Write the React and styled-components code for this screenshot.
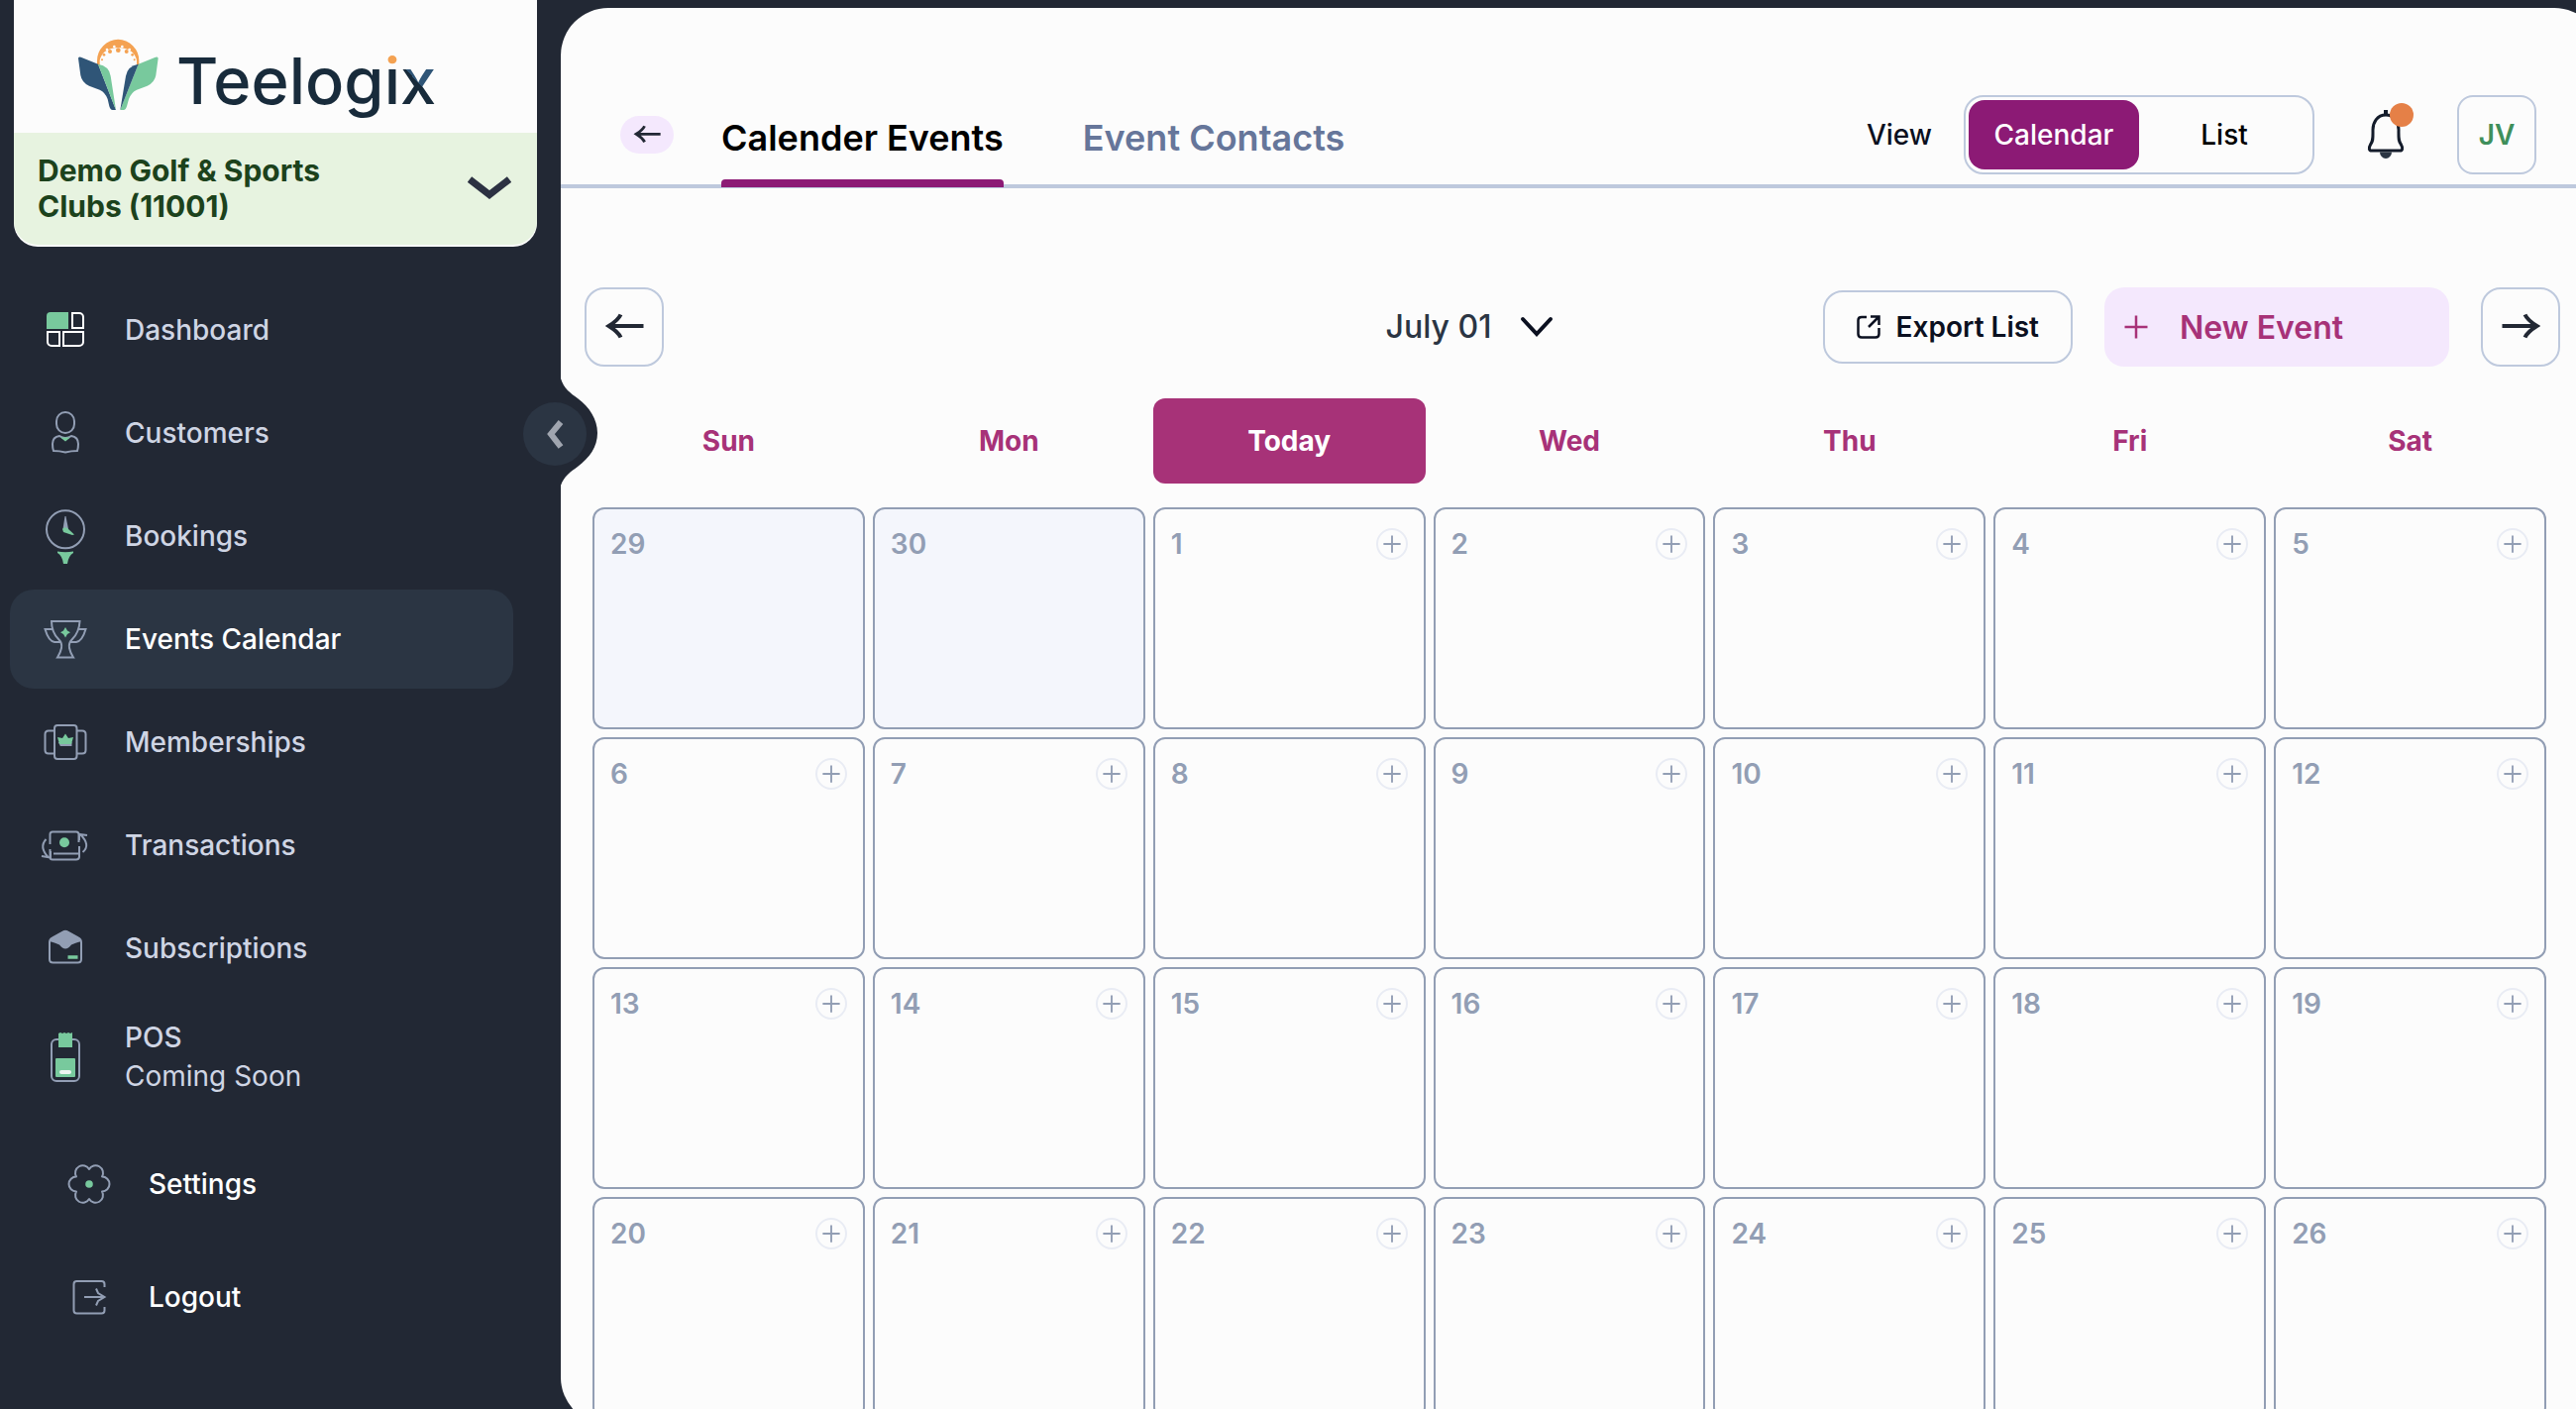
import React from "react";
import styled, { createGlobalStyle } from "styled-components";

const color = {
  ink: "#222834",
  inkSoft: "#2b3543",
  paper: "#fcfcfc",
  line: "#bec9dd",
  slate: "#929eb4",
  navText: "#cfd5e4",
  green: "#78c99d",
  plum: "#8c1a75",
  magenta: "#a73278",
  lavender: "#f4e8fd",
};

const GlobalStyle = createGlobalStyle`
  *, *::before, *::after { box-sizing: border-box; }
  body {
    margin: 0;
    background: ${color.ink};
    font-family: Inter, "Liberation Sans", sans-serif;
  }
  button, select { font-family: inherit; }
  svg { display: block; flex: none; }
`;

const Shell = styled.div`
  display: grid;
  grid-template-columns: 566px minmax(0, 1fr);
  height: 100vh;
  overflow: hidden;
  background: ${color.ink};
`;

/* ---------- Sidebar ---------- */

const Sidebar = styled.aside`
  position: relative;
  z-index: 1;
`;

const BrandCard = styled.div`
  margin: 0 24px 0 14px;
  padding-bottom: 2px;
  background: ${color.paper};
  border-radius: 0 0 24px 24px;
`;

const LogoLink = styled.a`
  display: block;
  padding: 30px 0 4px 56px;
`;

const ClubButton = styled.button`
  display: flex;
  align-items: center;
  justify-content: space-between;
  width: 100%;
  height: 113px;
  padding: 0 26px 2px 24px;
  border: 0;
  border-radius: 0 0 24px 24px;
  background: #e7f3e0;
  color: #1c421c;
  font-size: 30px;
  font-weight: 700;
  line-height: 36px;
  text-align: left;
`;

const ClubName = styled.span`
  max-width: 320px;
`;

const NavList = styled.ul`
  display: flex;
  flex-direction: column;
  gap: ${(p) => (p.$secondary ? 14 : 4)}px;
  margin: ${(p) => (p.$secondary ? 22 : 34)}px 48px 0 10px;
  padding: 0;
  list-style: none;
`;

const NavLink = styled.a`
  display: flex;
  align-items: center;
  gap: 30px;
  min-height: 100px;
  padding: 17px 26px 17px ${(p) => (p.$secondary ? 50 : 26)}px;
  border-radius: 24px;
  background: ${(p) => (p.$active ? color.inkSoft : "transparent")};
  color: ${(p) => (p.$active || p.$secondary ? "#ffffff" : color.navText)};
  font-size: 28px;
  font-weight: 500;
  line-height: 39px;
  text-decoration: none;
`;

const NavNote = styled.span`
  display: block;
  font-weight: 400;
`;

const CollapseButton = styled.button`
  position: absolute;
  top: 382px;
  right: -40px;
  width: 80px;
  height: 110px;
  padding: 0;
  border: 0;
  background: none;
`;

/* ---------- Main panel ---------- */

const Panel = styled.main`
  margin: 8px -26px -16px 0;
  overflow: hidden;
  background: ${color.paper};
  border-radius: 48px;
`;

const Header = styled.header`
  display: flex;
  align-items: flex-start;
  padding: 88px 66px 0 60px;
  border-bottom: 4px solid ${color.line};
`;

const BackButton = styled.button`
  display: grid;
  place-items: center;
  width: 54px;
  height: 38px;
  margin: 21px 48px 0 0;
  padding: 0;
  border: 0;
  border-radius: 19px;
  background: ${color.lavender};
`;

const Tabs = styled.nav`
  display: flex;
  gap: 80px;
  margin: 21px auto -3px 0;
`;

const Tab = styled.a`
  display: flex;
  flex-direction: column;
  color: ${(p) => (p.$active ? "#000000" : "#66769a")};
  font-size: 36px;
  font-weight: 600;
  line-height: 44px;
  text-decoration: none;

  &::after {
    content: "";
    height: 8px;
    margin-top: 20px;
    border-radius: 4px 4px 0 0;
    background: ${(p) => (p.$active ? color.plum : "transparent")};
  }
`;

const HeaderActions = styled.div`
  display: flex;
  align-items: center;
  gap: 44px;
`;

const ViewField = styled.div`
  display: flex;
  align-items: center;
  gap: 32px;
  color: #0b1020;
  font-size: 28px;
  font-weight: 500;
`;

const Toggle = styled.div`
  display: flex;
  width: 354px;
  height: 80px;
  padding: 3px;
  border: 2px solid ${color.line};
  border-radius: 20px;
`;

const ToggleOption = styled.button`
  flex: 1;
  padding: 0;
  border: 0;
  border-radius: 16px;
  background: ${(p) => (p.$active ? color.plum : "transparent")};
  color: ${(p) => (p.$active ? "#ffffff" : "#000000")};
  font-size: 28px;
  font-weight: 500;
`;

const BellButton = styled.button`
  position: relative;
  width: 56px;
  height: 80px;
  padding: 0;
  border: 0;
  background: none;
`;

const BellDot = styled.span`
  position: absolute;
  top: 8px;
  right: 0;
  width: 24px;
  height: 24px;
  border-radius: 50%;
  background: #e58047;
`;

const SquareButton = styled.button`
  display: grid;
  place-items: center;
  width: 80px;
  height: 80px;
  padding: 0;
  border: 2px solid ${color.line};
  border-radius: ${(p) => (p.$avatar ? 16 : 20)}px;
  background: ${color.paper};
  color: #3f8f5b;
  font-size: 28px;
  font-weight: 600;
`;

/* ---------- Toolbar ---------- */

const Toolbar = styled.div`
  display: flex;
  align-items: center;
  gap: 32px;
  padding: 100px 42px 0 24px;
`;

const MonthArea = styled.div`
  display: flex;
  flex: 1;
  justify-content: flex-end;
  padding-right: 240px;
`;

const MonthPicker = styled.label`
  position: relative;
  display: flex;
  align-items: center;
`;

const MonthSelect = styled.select`
  appearance: none;
  padding: 0 62px 0 0;
  border: 0;
  background: none;
  color: #2b3543;
  font-size: 32px;
  font-weight: 500;
  line-height: 40px;
`;

const MonthChevron = styled.svg`
  position: absolute;
  right: 0;
  pointer-events: none;
`;

const ExportButton = styled.button`
  display: flex;
  align-items: center;
  gap: 16px;
  height: 74px;
  padding: 0 32px;
  border: 2px solid ${color.line};
  border-radius: 20px;
  background: ${color.paper};
  color: #0b1020;
  font-size: 28px;
  font-weight: 600;
`;

const NewEventButton = styled.button`
  display: flex;
  align-items: center;
  gap: 32px;
  min-width: 348px;
  height: 80px;
  padding: 0 20px;
  border: 0;
  border-radius: 20px;
  background: ${color.lavender};
  color: ${color.magenta};
  font-size: 32px;
  font-weight: 600;
`;

/* ---------- Calendar ---------- */

const Calendar = styled.table`
  display: grid;
  grid-template-columns: repeat(7, minmax(0, 1fr));
  gap: 8px;
  margin: 32px 56px 6px 32px;

  thead, tbody, tr { display: contents; }
`;

const Weekday = styled.th`
  height: 86px;
  margin-bottom: 16px;
  padding: 0;
  border-radius: 12px;
  background: ${(p) => (p.$today ? color.magenta : "transparent")};
  color: ${(p) => (p.$today ? "#ffffff" : color.magenta)};
  font-size: 28px;
  font-weight: 700;
  line-height: 86px;
  text-align: center;
`;

const Day = styled.td`
  display: flex;
  align-items: flex-start;
  justify-content: space-between;
  height: 224px;
  padding: 19px 16px;
  border: 2px solid ${color.slate};
  border-radius: 12px;
  background: ${(p) => (p.$outside ? "#f4f6fc" : color.paper)};
  color: ${color.slate};
  font-size: 28px;
  font-weight: 600;
  line-height: 32px;
`;

const AddButton = styled.button`
  display: grid;
  place-items: center;
  width: 32px;
  height: 32px;
  padding: 0;
  border: 2px solid #e9ecf4;
  border-radius: 50%;
  background: ${color.paper};
`;

/* ---------- Drawings ---------- */

const Logo = () => (
  <svg width="390" height="100" viewBox="0 0 390 100" role="img" aria-label="Teelogix">
    <defs>
      <linearGradient id="logoI" gradientUnits="userSpaceOnUse" x1="0" y1="0" x2="0" y2="100">
        <stop offset="0.37" stopColor="#f4a252" />
        <stop offset="0.37" stopColor="#182b3b" />
      </linearGradient>
      <linearGradient id="logoX" gradientUnits="userSpaceOnUse" x1="349" y1="57" x2="366" y2="41">
        <stop offset="0.2" stopColor="#182b3b" />
        <stop offset="0.2" stopColor="#2f5577" />
      </linearGradient>
    </defs>
    <g transform="scale(0.3333)">
      <path
        d="M84 108V94A63 64 0 0 1 211 94V108H204V94Q202 78 188 66Q170 54 148 54Q126 54 108 66Q94 78 92 94V108Z"
        fill="#f4a252"
      />
      <g fill="#fcfcfc">
        <circle cx="136" cy="51" r="4" />
        <circle cx="160" cy="51" r="4" />
        <circle cx="114" cy="60" r="4" />
        <circle cx="182" cy="60" r="4" />
      </g>
      <g fill="#f4a252">
        <circle cx="148" cy="62" r="7" />
        <circle cx="123" cy="66" r="6" />
        <circle cx="173" cy="66" r="6" />
        <circle cx="105" cy="76" r="4" />
        <circle cx="191" cy="76" r="4" />
        <circle cx="99" cy="91" r="3" />
        <circle cx="197" cy="91" r="3" />
      </g>
      <path
        d="M27 86Q29 81 37 84L87 104L141 243H131Q124 243 121 232L116 210Q109 190 92 182L60 170Q38 160 34 138Z"
        fill="#2f5577"
      />
      <path d="M87 104Q121 110 125 140L141 243Z" fill={color.green} />
      <path
        d="M269 86Q267 81 259 84L209 104L154 243H164Q171 243 174 232L180 210Q187 190 204 182L236 170Q258 160 262 138Z"
        fill={color.green}
      />
      <path d="M209 104Q176 110 171 140L154 243Z" fill="#2f5577" />
    </g>
    <text x="108" y="75" fill="#182b3b" fontFamily="Inter, sans-serif" fontSize="65" fontWeight="500">
      Teelog<tspan fill="url(#logoI)">i</tspan>
      <tspan fill="url(#logoX)">x</tspan>
    </text>
  </svg>
);

const NavIcon = ({ children }) => (
  <svg
    width="60"
    height="60"
    viewBox="0 0 60 60"
    fill="none"
    stroke={color.slate}
    strokeWidth="2"
    aria-hidden="true"
  >
    {children}
  </svg>
);

const DashboardIcon = () => (
  <NavIcon>
    <path d="M15 12H33V29H11V16A4 4 0 0 1 15 12Z" fill={color.green} stroke="none" />
    <g stroke="#ffffff">
      <path d="M37 13H44A4 4 0 0 1 48 17V28H37Z" />
      <path d="M12 32H24V46H16A4 4 0 0 1 12 42Z" />
      <path d="M28 32H48V42A4 4 0 0 1 44 46H28Z" />
    </g>
  </NavIcon>
);

const CustomersIcon = () => (
  <NavIcon>
    <rect x="21" y="9" width="18" height="21" rx="9" />
    <path d="M24 33Q17 34 17 41Q17 45 18 48Q24 48 30 49.500Q36 48 42 48Q43 45 43 41Q43 34 36 33Q30 37 24 33Z" />
    <path d="M25 34.500H35L30 38.500Z" fill={color.green} stroke="none" />
  </NavIcon>
);

const BookingsIcon = () => (
  <NavIcon>
    <circle cx="30" cy="23.300" r="19" />
    <path d="M29.500 10H30.500L33 23H27.500Z" fill={color.slate} stroke="none" />
    <path d="M27 23Q29 20 32 22L39 28.500L37 29L28 26Z" fill={color.green} stroke="none" />
    <path d="M22 45.500Q30 47 38 45.500V47Q33 50 32 58H28Q27 50 22 47Z" fill={color.green} stroke="none" />
  </NavIcon>
);

const EventsIcon = () => (
  <NavIcon>
    <path d="M16 12H44.500Q44 23 37 30Q33 34 34 39Q35 44 38 48.500H22Q25 44 26 39Q27 34 23 30Q16 23 16 12Z" />
    <path d="M17.500 20H9.500Q13 32 19 33H25" />
    <path d="M43 20H50.500Q47 32 41 33H35" />
    <path d="M30 18L32 21.500L35 23.300L32 25L30 28.500L28 25L25 23.300L28 21.500Z" fill={color.green} stroke="none" />
  </NavIcon>
);

const MembershipsIcon = () => (
  <NavIcon>
    <rect x="19" y="13" width="22.500" height="34" rx="3" />
    <path d="M19 18.500H13Q9.500 18.500 9.500 22V38Q9.500 41.500 13 41.500H19" />
    <path d="M41.500 18.500H47Q50.500 18.500 50.500 22V38Q50.500 41.500 47 41.500H41.500" />
    <path d="M24.500 31H35.500V33H25.500Z" fill={color.slate} />
    <path d="M22 25L27 26L30 21.500L33 26L38 25L36 32H24Z" fill={color.green} stroke="none" />
  </NavIcon>
);

const TransactionsIcon = () => (
  <NavIcon>
    <path d="M14.500 29V19Q14.500 16.500 17 16.500H41Q43.500 16.500 43.500 19V27" />
    <path d="M14.500 34V42Q14.500 44.500 17 44.500H41Q43.500 44.500 44 42V31" />
    <path d="M18 38.500H43" />
    <circle cx="29" cy="27.300" r="5" fill={color.green} stroke="none" />
    <path d="M10.500 24Q3 32 13 42.500M6 41L15 42.500V36" />
    <path d="M47.500 37Q56 30 45 19M52 20L44 19V25" />
  </NavIcon>
);

const SubscriptionsIcon = () => (
  <NavIcon>
    <path d="M14 24Q14 21 17 19.500L28 13.500Q30 12 32 13.500L43 19.500Q46 21 46 24V41Q46 44.500 42.500 44.500H17.500Q14 44.500 14 41Z" />
    <path
      d="M14 23Q14 21 17 19L28 12.500Q30 11.500 32 12.500L43 19Q46 21 46 23Q41 24 36 26.500Q33 30.500 30 30.500Q27 30.500 24 26.500Q19 24 14 23Z"
      fill={color.slate}
      stroke="none"
    />
    <path d="M32.500 39H42.500" stroke={color.green} strokeWidth="3.500" />
  </NavIcon>
);

const PosIcon = () => (
  <NavIcon>
    <rect x="16" y="12" width="28" height="42" rx="5" />
    <path d="M23 6L25 5L27 6L29 5L31 6L33 5L35 6L37 5V20H23Z" fill={color.green} stroke="none" />
    <rect x="20" y="31" width="20" height="19" rx="1" fill={color.green} stroke="none" />
    <rect x="24" y="43" width="12" height="4" rx="2" fill="#eef5f1" stroke="none" />
  </NavIcon>
);

const SettingsIcon = () => (
  <NavIcon>
    <path
      d="M30 15A7.500 7.500 0 0 1 43 22.500A7.500 7.500 0 0 1 43 37.500A7.500 7.500 0 0 1 30 45A7.500 7.500 0 0 1 17 37.500A7.500 7.500 0 0 1 17 22.500A7.500 7.500 0 0 1 30 15Z"
      strokeLinejoin="round"
    />
    <circle cx="30" cy="30" r="3.800" fill={color.green} stroke="none" />
  </NavIcon>
);

const LogoutIcon = () => (
  <NavIcon>
    <path d="M45.500 20V17Q45.500 14 42.500 14H17.500Q14.500 14 14.500 17V43.500Q14.500 46.500 17.500 46.500H42.500Q45.500 46.500 45.500 43.500V40" />
    <path d="M25 30H46M37 21.500L39 26L45.500 30L39 34L37 38.500" />
  </NavIcon>
);

const ArrowIcon = ({ size, flip, stroke = 4 }) => (
  <svg width={size} height={size} viewBox="0 0 40 40" fill="none" stroke={color.ink} strokeWidth={stroke} aria-hidden="true">
    <path
      d={flip ? "M1.500 19H36M24.500 7.500Q27 13 36.500 19Q27 25 24.500 30.500" : "M39.500 19H5M16.500 7.500Q14 13 4.500 19Q14 25 16.500 30.500"}
    />
  </svg>
);

const PlusIcon = ({ size, stroke }) => (
  <svg width={size} height={size} viewBox="0 0 24 24" fill="none" stroke={stroke} strokeWidth="2.500" aria-hidden="true">
    <path d="M12 0.500V23.500M0.500 12H23.500" />
  </svg>
);

/* ---------- Data ---------- */

const primaryNav = [
  { label: "Dashboard", Icon: DashboardIcon },
  { label: "Customers", Icon: CustomersIcon },
  { label: "Bookings", Icon: BookingsIcon },
  { label: "Events Calendar", Icon: EventsIcon, active: true },
  { label: "Memberships", Icon: MembershipsIcon },
  { label: "Transactions", Icon: TransactionsIcon },
  { label: "Subscriptions", Icon: SubscriptionsIcon },
  { label: "POS", note: "Coming Soon", Icon: PosIcon },
];

const secondaryNav = [
  { label: "Settings", Icon: SettingsIcon },
  { label: "Logout", Icon: LogoutIcon },
];

const weekdays = ["Sun", "Mon", "Today", "Wed", "Thu", "Fri", "Sat"];

const weeks = [0, 1, 2, 3].map((week) =>
  weekdays.map((_, i) => {
    const n = week * 7 + i - 1;
    return n > 0 ? { n, outside: false } : { n: n + 30, outside: true };
  })
);

const NavItems = ({ items, secondary }) => (
  <NavList $secondary={secondary}>
    {items.map(({ label, note, Icon, active }) => (
      <li key={label}>
        <NavLink href="#" $active={active} $secondary={secondary}>
          <Icon />
          <span>
            {label}
            {note && <NavNote>{note}</NavNote>}
          </span>
        </NavLink>
      </li>
    ))}
  </NavList>
);

export default function App() {
  return (
    <>
      <GlobalStyle />
      <Shell>
        <Sidebar>
          <BrandCard>
            <LogoLink href="#">
              <Logo />
            </LogoLink>
            <ClubButton type="button" aria-haspopup="listbox">
              <ClubName>Demo Golf &amp; Sports Clubs (11001)</ClubName>
              <svg width="44" height="24" viewBox="0 0 44 24" fill="none" stroke="#2c3142" strokeWidth="7" aria-hidden="true">
                <path d="M2 3L22 18.500L42 3" />
              </svg>
            </ClubButton>
          </BrandCard>
          <nav>
            <NavItems items={primaryNav} />
            <NavItems items={secondaryNav} secondary />
          </nav>
          <CollapseButton type="button" aria-label="Collapse menu">
            <svg width="80" height="110" viewBox="0 0 80 110" aria-hidden="true">
              <path
                d="M39 0H40C43 10 50 15 57 20C69 29 77 41 77 55C77 69 69 80 57 89C50 94 43 99 40 108H39Z"
                fill={color.ink}
              />
              <circle cx="34" cy="56" r="32" fill={color.inkSoft} />
              <path d="M40 44L30 56L40 69" fill="none" stroke="#a0a5af" strokeWidth="6" />
            </svg>
          </CollapseButton>
        </Sidebar>

        <Panel>
          <Header>
            <BackButton type="button" aria-label="Back">
              <ArrowIcon size={28} />
            </BackButton>
            <Tabs>
              <Tab href="#" $active>
                Calender Events
              </Tab>
              <Tab href="#">Event Contacts</Tab>
            </Tabs>
            <HeaderActions>
              <ViewField>
                <span id="view-label">View</span>
                <Toggle role="group" aria-labelledby="view-label">
                  <ToggleOption type="button" $active>
                    Calendar
                  </ToggleOption>
                  <ToggleOption type="button">List</ToggleOption>
                </Toggle>
              </ViewField>
              <BellButton type="button" aria-label="Notifications">
                <svg width="56" height="80" viewBox="0 0 56 80" fill="none" stroke="#141c2b" strokeWidth="3" aria-hidden="true">
                  <path d="M28 15V20" strokeWidth="4" />
                  <path
                    d="M28 20C19 20 15 28 15 35C15 43 15.500 46 12.500 50C10.500 53.500 11 56 14 56H42C45 56 45.500 53.500 43.500 50C40.500 46 41 43 41 35C41 28 37 20 28 20Z"
                  />
                  <path d="M22 57.500H34A6 6.500 0 0 1 22 57.500Z" fill="#2b3543" stroke="none" />
                </svg>
                <BellDot />
              </BellButton>
              <SquareButton type="button" $avatar>
                JV
              </SquareButton>
            </HeaderActions>
          </Header>

          <Toolbar>
            <SquareButton type="button" aria-label="Previous month">
              <ArrowIcon size={40} />
            </SquareButton>
            <MonthArea>
              <MonthPicker>
                <MonthSelect aria-label="Month" defaultValue="07">
                  <option value="07">July 01</option>
                </MonthSelect>
                <MonthChevron width="34" height="22" viewBox="0 0 34 22" fill="none" stroke="#0b1020" strokeWidth="4" strokeLinecap="round">
                  <path d="M3 3L17 18L31 3" />
                </MonthChevron>
              </MonthPicker>
            </MonthArea>
            <ExportButton type="button">
              <svg width="24" height="24" viewBox="0 0 24 24" fill="none" stroke="#0b1020" strokeWidth="2.500" aria-hidden="true">
                <path d="M10 2H5Q1.500 2 1.500 5V19Q1.500 22.500 5 22.500H19Q22.500 22.500 22.500 19V13" />
                <path d="M12 12L22 2M14 1.500H22.500V10" />
              </svg>
              Export List
            </ExportButton>
            <NewEventButton type="button">
              <PlusIcon size={24} stroke={color.magenta} />
              New Event
            </NewEventButton>
            <SquareButton type="button" aria-label="Next month">
              <ArrowIcon size={40} flip />
            </SquareButton>
          </Toolbar>

          <Calendar>
            <thead>
              <tr>
                {weekdays.map((day) => (
                  <Weekday key={day} scope="col" $today={day === "Today"}>
                    {day}
                  </Weekday>
                ))}
              </tr>
            </thead>
            <tbody>
              {weeks.map((week) => (
                <tr key={week[0].n}>
                  {week.map(({ n, outside }) => (
                    <Day key={n} $outside={outside}>
                      {n}
                      {!outside && (
                        <AddButton type="button" aria-label={`Add event on July ${n}`}>
                          <PlusIcon size={18} stroke={color.slate} />
                        </AddButton>
                      )}
                    </Day>
                  ))}
                </tr>
              ))}
            </tbody>
          </Calendar>
        </Panel>
      </Shell>
    </>
  );
}
